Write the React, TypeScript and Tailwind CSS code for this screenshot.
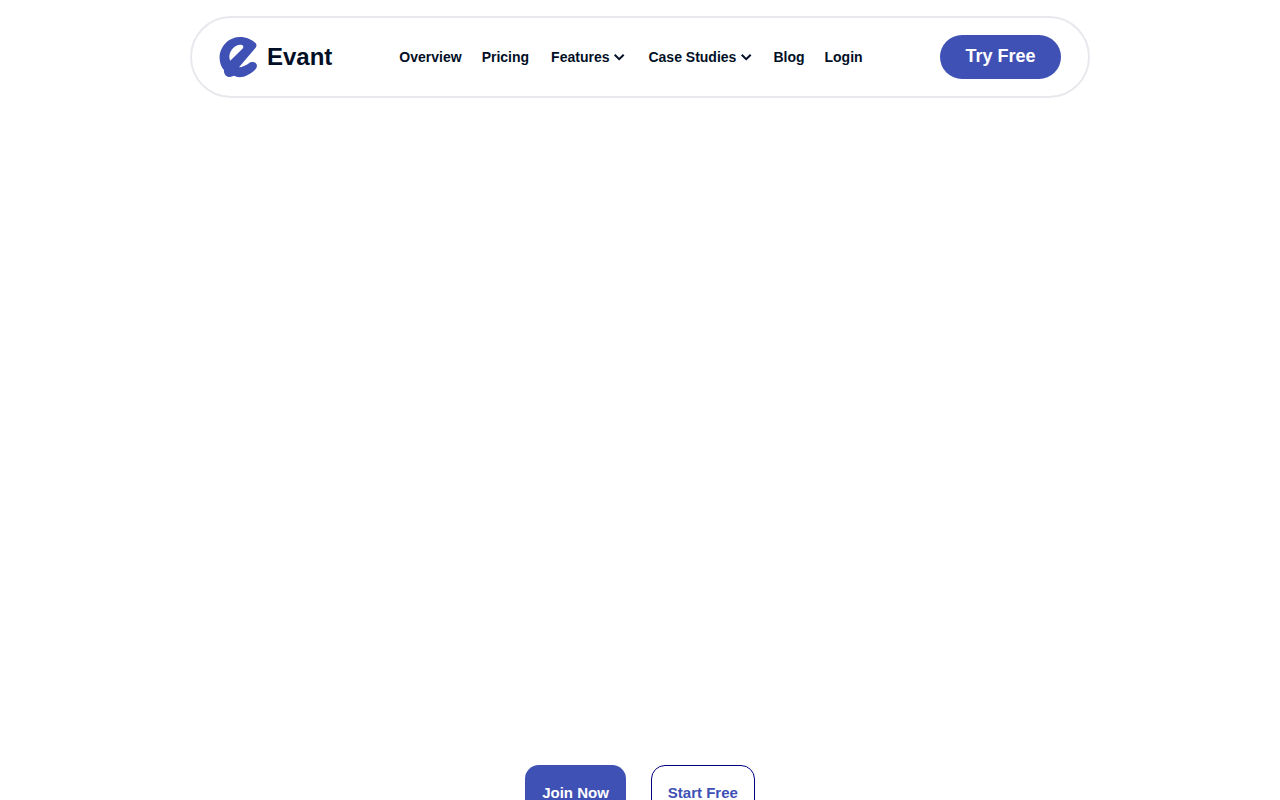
function Logo() {
  return (
    <svg viewBox="0 0 40 42" className="h-[42px] w-10 shrink-0" aria-hidden="true">
      <path
        fill="#3f51b5"
        fillRule="evenodd"
        d="M20 1C26.500 .7 33 3.400 36.700 7.200C38 8.500 37.600 10.400 36.400 11.900L20 31.200C23.400 31 26.600 29.400 29.600 27.400C31.600 26 33.400 25.700 35.200 26.200C37.800 27 38.600 29.700 37.400 31.900C35.400 34.800 32 37.200 28.600 39C26 40.500 23.500 41.200 20.500 41.200C18.400 41.200 16.600 40.700 15 39.800C12 41.500 8.300 41.300 6.500 39.200C5.200 37.700 4.900 36 4.900 34C2.100 31 .6 26.500 .6 22C.6 10.500 9.500 1.500 20 1ZM11.200 24.700C9.600 21.500 10.200 16.500 13.500 12.800C16.500 9.400 20 8.300 22.800 9C24.600 9.500 24.800 11.300 23.500 12.800Z"
      />
    </svg>
  );
}

function Chevron() {
  return (
    <svg
      viewBox="0 0 12 12"
      className="size-3 shrink-0"
      fill="none"
      stroke="currentColor"
      strokeWidth="2"
      aria-hidden="true"
    >
      <path d="M.7 3.700L5.200 8.200L9.700 3.700" />
    </svg>
  );
}

const links = [
  { label: "Overview" },
  { label: "Pricing" },
  { label: "Features", menu: true },
  { label: "Case Studies", menu: true },
  { label: "Blog" },
  { label: "Login" },
];

export default function App() {
  return (
    <div className="flex h-screen flex-col overflow-hidden bg-white px-4 pt-4 font-['Liberation_Sans',Arial,sans-serif] font-bold text-[#020f26]">
      <header className="mx-auto flex h-[82px] w-full max-w-[900px] shrink-0 items-center rounded-full border-2 border-[#e8e9ed] px-[27px]">
        <a href="#home" className="mr-[67px] flex items-center gap-2 text-2xl">
          <Logo />
          Evant
        </a>
        <nav className="flex items-center gap-5 text-sm">
          {links.map(({ label, menu }) =>
            menu ? (
              <button key={label} type="button" className="flex items-center gap-[5px] pl-0.5 whitespace-nowrap">
                {label}
                <Chevron />
              </button>
            ) : (
              <a key={label} href={`#${label.toLowerCase()}`}>
                {label}
              </a>
            ),
          )}
        </nav>
        <button
          type="button"
          className="ml-auto h-11 w-[121px] rounded-full bg-[#3f51b5] pb-0.5 text-lg text-white"
        >
          Try Free
        </button>
      </header>
      <main className="flex min-h-0 grow flex-col">
        <section className="flex justify-center gap-[25px] pt-[667px] text-[15px]">
          <button type="button" className="h-14 rounded-[14px] bg-[#3f51b5] px-[17px] text-white">
            Join Now
          </button>
          <button
            type="button"
            className="h-14 rounded-[14px] border border-[#000080] bg-white px-4 text-[#3f51b5]"
          >
            Start Free
          </button>
        </section>
      </main>
    </div>
  );
}
